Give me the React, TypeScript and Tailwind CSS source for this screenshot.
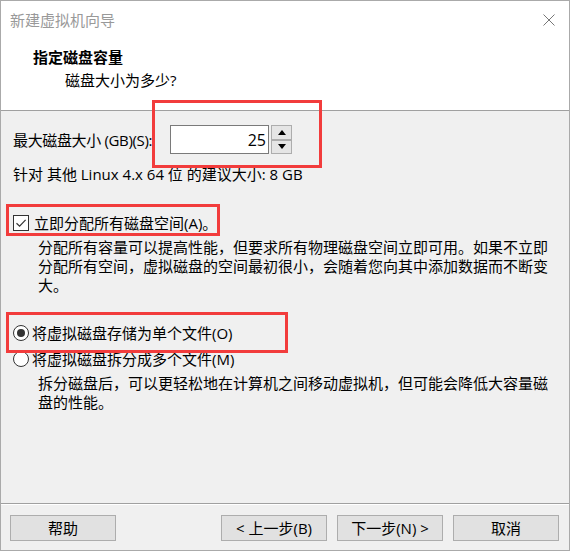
import React from "react";

function Checkbox() {
  return (
    <span className="flex size-[16px] shrink-0 items-center justify-center border border-[#333333] bg-white">
      <svg width="12" height="12" viewBox="0 0 12 12" aria-hidden>
        <path d="M1.5 6.2 L4.6 9.2 L10.6 2.8" fill="none" stroke="#333333" strokeWidth="1.2" />
      </svg>
    </span>
  );
}

function Radio({ checked }: { checked?: boolean }) {
  return (
    <span className="flex size-[16px] shrink-0 items-center justify-center rounded-full border border-[#333333] bg-white">
      {checked && <span className="size-[8px] rounded-full bg-[#333333]" />}
    </span>
  );
}

function SpinButton({ up }: { up?: boolean }) {
  return (
    <div className="flex flex-1 items-center justify-center border border-[#adadad] bg-[#e5e5e5]">
      <svg width="8" height="5" viewBox="0 0 8 5" aria-hidden>
        <path d={up ? "M0 5 L4 0 L8 5 Z" : "M0 0 L4 5 L8 0 Z"} fill="#000000" />
      </svg>
    </div>
  );
}

function WinButton({ children }: { children: React.ReactNode }) {
  return (
    <div className="flex h-[26px] w-[106px] items-center justify-center border border-[#adadad] bg-[#e1e1e1] leading-5">
      {children}
    </div>
  );
}

export default function App() {
  return (
    <div className="relative flex h-[551px] w-[570px] flex-col border border-[#aaaaaa] bg-[#f0f0f0] font-['Open_Sans','Noto_Sans_CJK_SC',sans-serif] text-[15px] text-black">
      <header className="h-[110px] shrink-0 border-b border-[#a0a0a0] bg-white">
        <div className="flex h-[38px] items-center justify-between pl-[9px] pr-[14px]">
          <span className="leading-5 text-[#999999]">新建虚拟机向导</span>
          <svg width="12" height="12" viewBox="0 0 12 12" aria-hidden>
            <path d="M0.5 0.5 L11.5 11.5 M11.5 0.5 L0.5 11.5" stroke="#777777" strokeWidth="1" />
          </svg>
        </div>
        <div className="mt-[8px] pl-[32px] font-bold leading-5">指定磁盘容量</div>
        <div className="mt-[3px] pl-[64px] leading-5">磁盘大小为多少?</div>
      </header>

      <main className="flex-1 pl-[12px] pt-[14px]">
        <div className="flex h-[29px] items-center">
          <span className="w-[157px] shrink-0 whitespace-nowrap leading-5 tracking-[-0.35px]">最大磁盘大小 (GB)(S):</span>
          <div className="flex h-[29px] w-[99px] items-center justify-end border border-[#7a7a7a] bg-white pr-[2px] text-[16px] leading-5">
            25
          </div>
          <div className="ml-[2px] flex h-[29px] w-[21px] flex-col">
            <SpinButton up />
            <SpinButton />
          </div>
        </div>
        <p className="mt-[10px] leading-5">针对 其他 Linux 4.x 64 位 的建议大小: 8 GB</p>

        <div className="mt-[29px] flex h-5 items-center">
          <Checkbox />
          <span className="ml-[5px] leading-5">立即分配所有磁盘空间(A)。</span>
        </div>
        <p className="ml-[25px] mt-[5px] w-[515px] leading-[19px]">
          分配所有容量可以提高性能，但要求所有物理磁盘空间立即可用。如果不立即分配所有空间，虚拟磁盘的空间最初很小，会随着您向其中添加数据而不断变大。
        </p>

        <div className="mt-[28px] flex h-5 items-center">
          <Radio checked />
          <span className="ml-[3px] leading-5">将虚拟磁盘存储为单个文件(O)</span>
        </div>
        <div className="mt-[6px] flex h-5 items-center">
          <Radio />
          <span className="ml-[3px] leading-5">将虚拟磁盘拆分成多个文件(M)</span>
        </div>
        <p className="ml-[25px] mt-[5px] w-[515px] leading-[19px]">
          拆分磁盘后，可以更轻松地在计算机之间移动虚拟机，但可能会降低大容量磁盘的性能。
        </p>
      </main>

      <footer className="shrink-0 border-t border-[#a0a0a0]">
        <div className="flex items-center justify-between border-t border-white pb-[9px] pl-[9px] pr-[10px] pt-[10px]">
          <WinButton>帮助</WinButton>
          <div className="flex gap-[10px]">
            <WinButton>&lt; 上一步(B)</WinButton>
            <WinButton>下一步(N) &gt;</WinButton>
            <WinButton>取消</WinButton>
          </div>
        </div>
      </footer>

      {/* red annotation frames drawn over the dialog */}
      <div className="pointer-events-none absolute left-[151px] top-[99px] h-[68px] w-[170px] border-[3px] border-[#f23c3c]" />
      <div className="pointer-events-none absolute left-[5px] top-[203px] h-[32px] w-[214px] border-[3px] border-[#f23c3c]" />
      <div className="pointer-events-none absolute left-[5px] top-[311px] h-[41px] w-[282px] border-[3px] border-[#f23c3c]" />
    </div>
  );
}
